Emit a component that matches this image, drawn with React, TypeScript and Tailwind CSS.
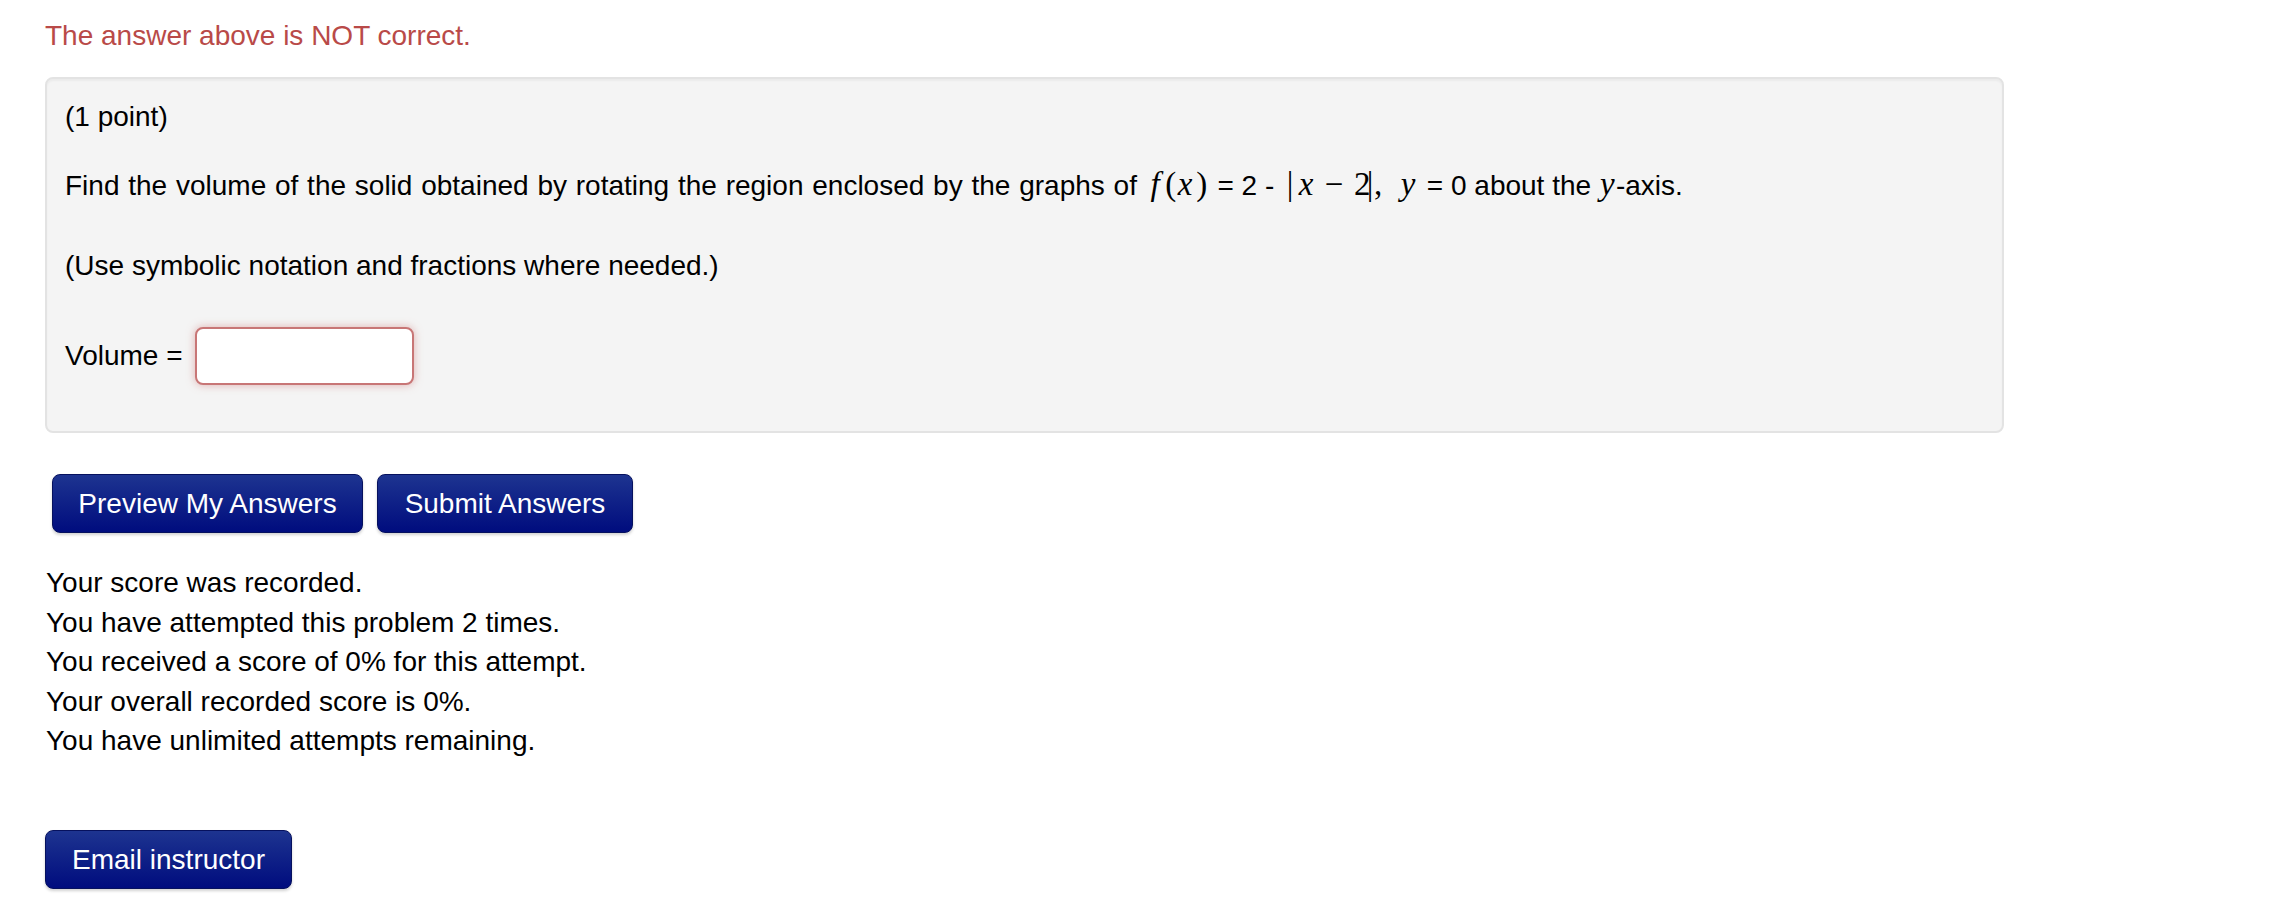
import React from "react";

const mi =
  "inline-block text-center font-['Liberation_Serif','Times_New_Roman',serif] text-[33px] italic";
const mo =
  "inline-block text-center font-['Liberation_Serif','Times_New_Roman',serif] text-[33px]";

const btn =
  "h-[59px] flex items-center justify-center rounded-[8px] border border-[#06115e] bg-[linear-gradient(to_bottom,#1d3490,#000c7e)] text-white shadow-[0_2px_3px_rgba(0,0,0,0.18)]";

export default function App() {
  return (
    <div className="min-h-[913px] bg-white font-['Liberation_Sans',Arial,sans-serif] text-[28px] leading-[39.4px] text-black pl-[45px] pt-[16.4px]">
      <div className="text-[#b94a48]">The answer above is NOT correct.</div>

      <div className="mt-[21.7px] w-[1959px] rounded-[8px] border-2 border-[#e3e3e3] bg-[#f4f4f4] pl-[18px] pt-[18px] pb-[45.7px] shadow-[inset_0_2px_2px_rgba(0,0,0,0.04)]">
        <div>(1 point)</div>
        <div className="mt-[28px] whitespace-nowrap">
          <span className="[word-spacing:1px]">
            Find the volume of the solid obtained by rotating the region enclosed by the graphs of{" "}
          </span>
          <span className={`${mi} w-[19px]`}>f</span>
          <span className={`${mo} w-[12px]`}>(</span>
          <span className={`${mi} w-[17px]`}>x</span>
          <span className={`${mo} w-[16px]`}>)</span>
          {" = 2 - "}
          <span className={`${mo} w-[16px]`}>|</span>
          <span className={`${mi} w-[16px]`}>x</span>
          <span className={`${mo} w-[40px]`}>−</span>
          <span className={`${mo} w-[12px]`}>2</span>
          <span className={`${mo} w-[8px]`}>|</span>
          <span className={`${mo} w-[8px]`}>,</span>
          <span className={`${mi} ml-[15px] w-[22px]`}>y</span>
          {" = 0 about the "}
          <span className={`${mi} w-[17px]`}>y</span>
          -axis.
        </div>
        <div className="mt-[40.3px]">(Use symbolic notation and fractions where needed.)</div>
        <div className="mt-[42px] flex h-[58px] items-center">
          <span>Volume =</span>
          <input
            type="text"
            className="ml-[12px] h-[58px] w-[219px] rounded-[8px] border-2 border-[#c87676] bg-white outline-none shadow-[0_0_8px_rgba(213,147,146,0.7)]"
          />
        </div>
      </div>

      <div className="mt-[41.6px] flex gap-[14px] pl-[7px]">
        <button className={`${btn} w-[311px]`}>Preview My Answers</button>
        <button className={`${btn} w-[256px]`}>Submit Answers</button>
      </div>

      <div className="mt-[30px] pl-[1px]">
        <div>Your score was recorded.</div>
        <div>You have attempted this problem 2 times.</div>
        <div>You received a score of 0% for this attempt.</div>
        <div>Your overall recorded score is 0%.</div>
        <div>You have unlimited attempts remaining.</div>
      </div>

      <div className="mt-[69.6px]">
        <button className={`${btn} w-[247px]`}>Email instructor</button>
      </div>
    </div>
  );
}
